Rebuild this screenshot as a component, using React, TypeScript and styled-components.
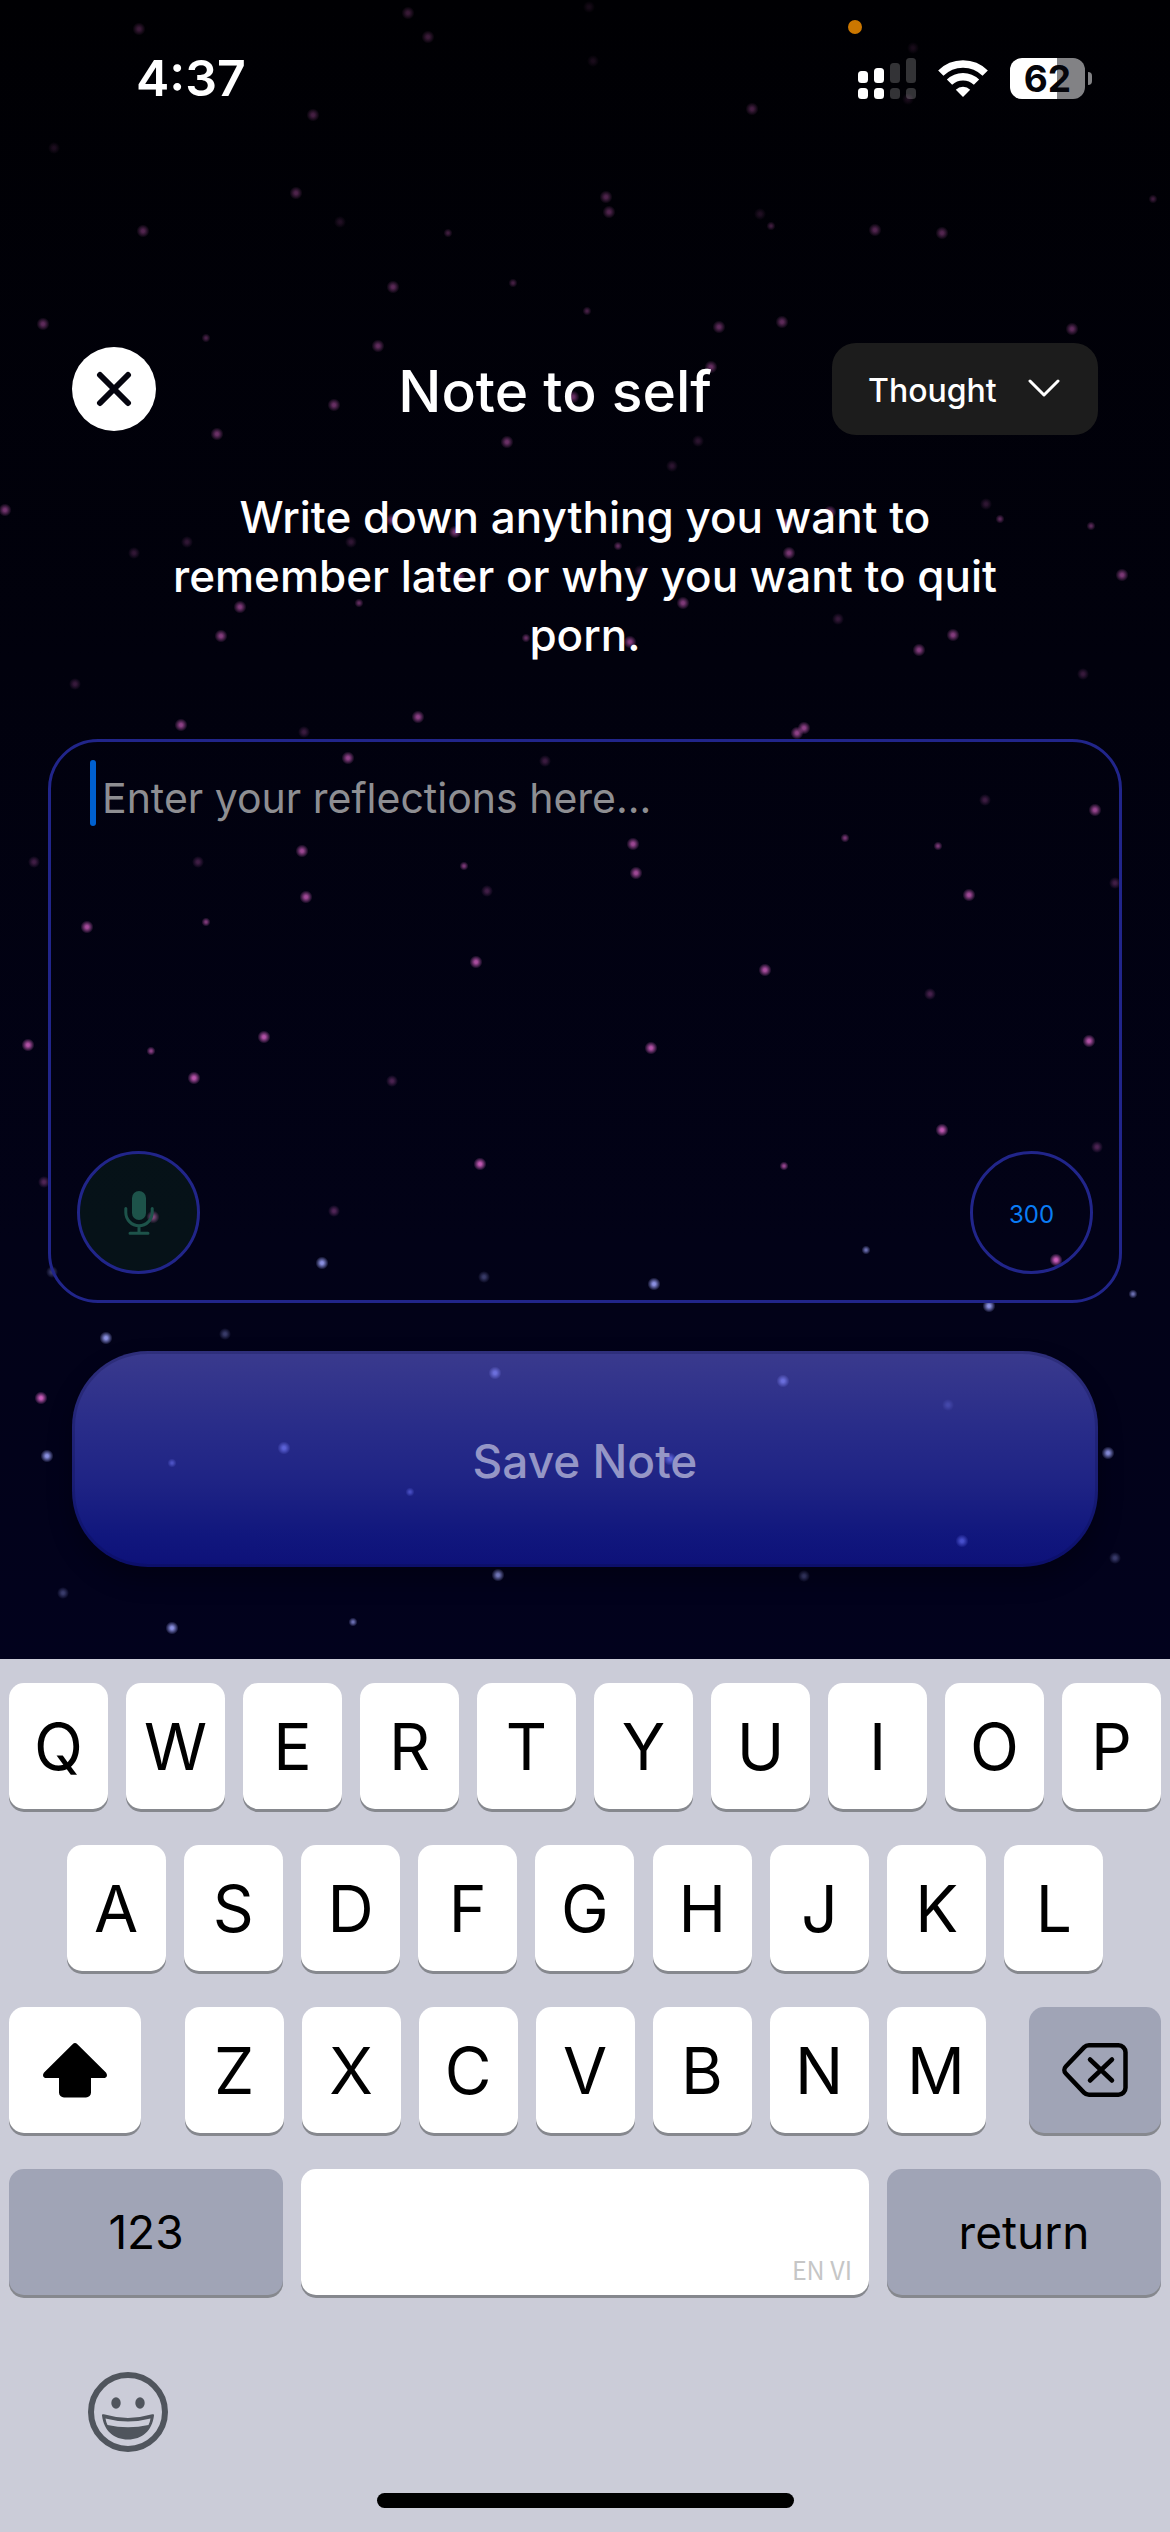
import React, { useState } from "react";
import styled, { createGlobalStyle, css } from "styled-components";

const GlobalStyle = createGlobalStyle`
  *, *::before, *::after { box-sizing: border-box; }
  body { margin: 0; background: #cbccd8; }
  button, textarea, select { font: inherit; color: inherit; margin: 0; padding: 0; border: 0; background: none; }
  svg { display: block; }
`;

const Page = styled.div`
  min-height: 100vh;
  display: flex;
  flex-direction: column;
  font-family: Inter, "Liberation Sans", sans-serif;
  color: #ffffff;
`;

const Screen = styled.div`
  position: relative;
  z-index: 0;
  flex: 1;
  display: flex;
  flex-direction: column;
  padding-bottom: 92px;
  background: linear-gradient(180deg, #000003 0%, #01010d 40%, #020217 75%, #02021d 100%);
`;

const Sky = styled.svg`
  position: absolute;
  inset: 0;
  width: 100%;
  height: 100%;
  z-index: -1;
`;

const StatusBar = styled.header`
  display: flex;
  align-items: center;
  justify-content: space-between;
  height: 156px;
  padding: 0 78px 0 136px;
`;

const Clock = styled.time`
  font-size: 50px;
  line-height: 60px;
  font-weight: 600;
`;

const StatusIcons = styled.div`
  display: flex;
  align-items: center;
  gap: 22px;
`;

const Battery = styled.div`
  display: flex;
  align-items: center;
  gap: 3px;
`;

const BatteryBody = styled.div`
  width: 75px;
  border-radius: 12px;
  background: linear-gradient(90deg, #ffffff 63%, #828285 63%);
  color: #05050a;
  font-size: 37px;
  line-height: 41px;
  font-weight: 700;
  text-align: center;
`;

const BatteryTip = styled.div`
  width: 4px;
  height: 13px;
  border-radius: 0 4px 4px 0;
  background: #828285;
`;

const RecordingDot = styled.div`
  position: absolute;
  top: 20px;
  right: 308px;
  width: 14px;
  height: 14px;
  border-radius: 50%;
  background: #cb7700;
`;

const TitleBar = styled.div`
  display: flex;
  align-items: center;
  margin-top: 187px;
  padding: 0 72px;
`;

const CloseButton = styled.button`
  display: grid;
  place-items: center;
  width: 84px;
  height: 84px;
  border-radius: 50%;
  background: #ffffff;
`;

const Title = styled.h1`
  flex: 1;
  margin: 0;
  padding: 6px 120px 0 0;
  font-size: 57px;
  line-height: 68px;
  font-weight: 500;
  text-align: right;
`;

const Picker = styled.div`
  display: grid;
  align-items: center;
  width: 266px;
  height: 92px;
  border-radius: 24px;
  background: #1c1c1c;

  > * { grid-area: 1 / 1; }
  > svg { justify-self: end; margin-right: 38px; pointer-events: none; }
`;

const PickerSelect = styled.select`
  appearance: none;
  width: 100%;
  height: 100%;
  padding: 4px 0 0 36px;
  font-size: 32px;
  line-height: 40px;
  font-weight: 500;
`;

const Intro = styled.p`
  width: 860px;
  max-width: 100%;
  margin: 53px auto 0;
  font-size: 44px;
  line-height: 59px;
  font-weight: 500;
  text-align: center;
`;

const NoteCard = styled.section`
  display: flex;
  flex-direction: column;
  height: 564px;
  margin: 74px 48px 0;
  padding: 18px 26px 26px;
  border: 3px solid #21258a;
  border-radius: 50px;
`;

const NoteField = styled.div`
  flex: 1;
  display: flex;
  gap: 6px;
  padding-left: 13px;
`;

const Caret = styled.span`
  width: 6px;
  height: 66px;
  border-radius: 3px;
  background: #0060cf;
`;

const NoteInput = styled.textarea`
  flex: 1;
  padding-top: 12px;
  resize: none;
  outline: none;
  font-size: 41px;
  line-height: 52px;

  &::placeholder { color: #8e8e92; opacity: 1; }
`;

const NoteTools = styled.div`
  display: flex;
  justify-content: space-between;
`;

const ring = css`
  display: grid;
  place-items: center;
  width: 123px;
  height: 123px;
  border: 3px solid #21258a;
  border-radius: 50%;
`;

const MicButton = styled.button`
  ${ring}
  background: rgba(12, 42, 28, 0.4);
`;

const Remaining = styled.output`
  ${ring}
  padding-top: 4px;
  color: #0a7cf5;
  font-size: 24px;
`;

const SaveButton = styled.button`
  height: 216px;
  margin: 48px 72px 0;
  padding-top: 4px;
  border: 3px solid rgba(10, 10, 60, 0.22);
  border-radius: 76px;
  background: linear-gradient(180deg, rgba(97, 97, 220, 0.6) 0%, rgba(68, 74, 212, 0.6) 35%, rgba(50, 58, 204, 0.6) 62%, rgba(28, 38, 192, 0.6) 85%, rgba(22, 28, 184, 0.6) 100%) border-box;
  box-shadow: 0 12px 24px rgba(0, 0, 0, 0.3);
  color: #9596c6;
  font-size: 46px;
  line-height: 60px;
  font-weight: 500;
`;

const Keyboard = styled.section`
  display: flex;
  flex-direction: column;
  align-items: stretch;
  gap: 36px;
  padding: 24px 9px;
  background: #cbccd8;
  color: #000000;
`;

const KeyRow = styled.div<{ $inset?: boolean }>`
  display: flex;
  justify-content: space-between;
  padding: 0 ${(p) => (p.$inset ? "5%" : "0")};
`;

const LetterGroup = styled.div`
  flex: 0 1 801px;
  display: flex;
  gap: 18px;
`;

const Key = styled.button<{ $size?: "letter" | "side" | "wide" | "space"; $dim?: boolean }>`
  display: grid;
  place-items: center;
  flex: 0 1 ${(p) => ({ letter: 99, side: 132, wide: 274, space: 568 })[p.$size ?? "letter"]}px;
  min-width: 0;
  height: 126px;
  border-radius: 15px;
  background: ${(p) => (p.$dim ? "#a0a4b6" : "#ffffff")};
  box-shadow: 0 3px 0 #86888e;
  font-size: ${(p) => (p.$size === "wide" ? 46 : 64)}px;
`;

const SpaceKey = styled(Key)`
  place-items: end;
  padding: 0 17px 8px 0;
  color: #c6c6c6;
  font-family: "Noto Sans CJK SC", "Liberation Sans", sans-serif;
  font-size: 25px;
  line-height: 36px;
`;

const KeyboardFooter = styled.div`
  display: flex;
  flex-direction: column;
  gap: 41px;
  padding: 41px 0 0 79px;
`;

const EmojiButton = styled.button`
  width: 80px;
  height: 80px;
`;

const HomeIndicator = styled.div`
  align-self: center;
  width: 417px;
  height: 15px;
  margin-right: 79px;
  border-radius: 8px;
  background: #000000;
`;

type Kind = "b" | "s" | "f";
type Star = [number, number, Kind];

/* b: bright, s: small, f: faint */
const pinkStars: Star[] = [
  [139, 29, "b"], [408, 13, "b"], [589, 7, "f"], [428, 37, "b"], [593, 61, "f"], [913, 48, "f"], [908, 99, "f"],
  [313, 115, "b"], [752, 109, "b"], [54, 148, "f"], [296, 193, "b"], [606, 197, "b"], [609, 212, "b"],
  [1153, 199, "s"], [760, 214, "f"], [771, 226, "s"], [340, 222, "f"], [143, 231, "b"], [448, 233, "s"],
  [875, 230, "b"], [942, 233, "b"], [393, 287, "b"], [513, 283, "s"], [587, 311, "s"], [43, 324, "b"],
  [719, 327, "b"], [782, 322, "b"], [1072, 329, "b"], [206, 338, "s"], [378, 346, "b"], [711, 367, "b"],
  [334, 405, "b"], [573, 397, "b"], [217, 434, "b"], [507, 442, "b"], [698, 441, "f"], [672, 466, "f"],
  [5, 510, "b"], [392, 520, "b"], [455, 532, "b"], [830, 512, "b"], [787, 524, "b"], [986, 504, "f"],
  [1000, 519, "s"], [1091, 526, "s"], [187, 542, "f"], [351, 542, "f"], [134, 553, "f"], [618, 546, "s"],
  [789, 553, "b"], [1122, 575, "b"], [640, 571, "f"], [459, 577, "b"], [240, 607, "b"], [359, 603, "s"],
  [683, 603, "b"], [838, 619, "f"], [221, 636, "b"], [953, 635, "b"], [919, 650, "b"], [526, 638, "s"],
  [630, 642, "b"], [75, 684, "f"], [1083, 674, "f"], [181, 725, "b"], [418, 717, "b"], [304, 732, "f"],
  [797, 733, "b"], [804, 728, "b"], [348, 758, "b"], [545, 761, "f"], [985, 800, "f"], [1095, 810, "b"],
  [633, 844, "b"], [845, 838, "s"], [938, 846, "s"], [302, 851, "b"], [34, 862, "f"], [198, 862, "f"],
  [464, 866, "s"], [636, 873, "b"], [1115, 883, "f"], [487, 891, "f"], [306, 897, "b"], [969, 895, "b"],
  [87, 927, "b"], [206, 922, "s"], [476, 962, "b"], [765, 970, "b"], [930, 994, "f"], [264, 1037, "b"],
  [28, 1045, "b"], [151, 1051, "s"], [651, 1048, "b"], [1089, 1041, "b"], [194, 1078, "b"], [392, 1081, "f"],
  [942, 1130, "b"], [480, 1164, "b"], [784, 1166, "s"], [1097, 1147, "f"], [44, 1182, "f"], [153, 1217, "b"],
  [334, 1211, "f"], [1056, 1260, "b"], [41, 1398, "b"],
];

const blueStars: Star[] = [
  [866, 1250, "s"], [322, 1263, "b"], [484, 1277, "f"], [52, 1272, "f"], [654, 1284, "b"], [1133, 1294, "s"],
  [989, 1306, "b"], [106, 1338, "b"], [225, 1334, "f"], [495, 1373, "b"], [783, 1381, "b"], [948, 1405, "f"],
  [284, 1448, "b"], [172, 1463, "s"], [47, 1456, "b"], [1108, 1453, "b"], [670, 1459, "b"], [410, 1492, "s"],
  [962, 1541, "b"], [1115, 1558, "f"], [498, 1575, "b"], [804, 1576, "f"], [63, 1593, "f"], [172, 1628, "b"],
  [353, 1622, "s"],
];

const radius: Record<Kind, number> = { b: 6.5, s: 4.5, f: 6 };
const strength: Record<Kind, number> = { b: 1, s: 0.75, f: 0.4 };

function StarField() {
  const draw = (stars: Star[], fill: string) =>
    stars.map(([x, y, kind]) => (
      <circle
        key={`${x}-${y}`}
        cx={x}
        cy={y}
        r={radius[kind]}
        fill={`url(#${fill})`}
        opacity={strength[kind] * Math.min(1, 0.27 + y / 1700)}
      />
    ));
  return (
    <Sky viewBox="0 0 1170 1659" preserveAspectRatio="xMidYMin slice" aria-hidden="true">
      <defs>
        <radialGradient id="pink">
          <stop offset="0.2" stopColor="#c95cb9" />
          <stop offset="1" stopColor="#c95cb9" stopOpacity="0" />
        </radialGradient>
        <radialGradient id="blue">
          <stop offset="0.2" stopColor="#8b90e0" />
          <stop offset="1" stopColor="#8b90e0" stopOpacity="0" />
        </radialGradient>
      </defs>
      {draw(pinkStars, "pink")}
      {draw(blueStars, "blue")}
    </Sky>
  );
}

const SignalIcon = () => (
  <svg width="58" height="41" viewBox="0 0 58 41" fill="#ffffff" role="img" aria-label="Signal strength">
    <rect x="0" y="13" width="10" height="12" rx="3.5" />
    <rect x="16" y="10" width="10" height="15" rx="3.5" />
    <rect x="32" y="5" width="10" height="20" rx="3.5" opacity="0.2" />
    <rect x="48" y="0" width="10" height="25" rx="3.5" opacity="0.2" />
    <rect x="0" y="30" width="10" height="11" rx="3.5" />
    <rect x="16" y="30" width="10" height="11" rx="3.5" />
    <rect x="32" y="30" width="10" height="11" rx="3.5" opacity="0.2" />
    <rect x="48" y="30" width="10" height="11" rx="3.5" opacity="0.2" />
  </svg>
);

const WifiIcon = () => (
  <svg width="50" height="37" viewBox="0 0 50 37" role="img" aria-label="Wi-Fi">
    <g fill="none" stroke="#ffffff" strokeWidth="7.5">
      <path d="M2.8 13.2a31.5 31.5 0 0 1 44.4 0" />
      <path d="M11.5 22.2a19.2 19.2 0 0 1 27 0" />
    </g>
    <path d="M25 37l-7.2-7.3a10.2 10.2 0 0 1 14.4 0z" fill="#ffffff" />
  </svg>
);

const CloseIcon = () => (
  <svg width="36" height="36" viewBox="0 0 36 36" fill="none" stroke="#05050f" strokeWidth="6" strokeLinecap="round" aria-hidden="true">
    <path d="M4 4l28 28M32 4L4 32" />
  </svg>
);

const ChevronIcon = () => (
  <svg width="32" height="20" viewBox="0 0 32 20" fill="none" stroke="#ffffff" strokeWidth="3" strokeLinecap="round" strokeLinejoin="round" aria-hidden="true">
    <path d="M2 2l14 14L30 2" />
  </svg>
);

const MicIcon = () => (
  <svg width="30" height="44" viewBox="0 0 30 44" fill="none" stroke="#1d534a" strokeWidth="3" strokeLinecap="round" aria-hidden="true">
    <rect x="8" y="0" width="14" height="29" rx="7" fill="#1d534a" stroke="none" />
    <path d="M1.8 17.5v4a13.2 13.2 0 0 0 26.4 0v-4M15 35v7M6 42.2h18" />
  </svg>
);

const ShiftIcon = () => (
  <svg width="64" height="55" viewBox="0 0 64 55" aria-hidden="true">
    <path d="M29.6 1.3a3.4 3.4 0 0 1 4.8 0L62.4 29c3 3 1.3 6-1.8 6H48v14.5a5 5 0 0 1-5 5H21a5 5 0 0 1-5-5V35H3.4c-3.1 0-4.8-3-1.8-6z" fill="#000000" />
  </svg>
);

const DeleteIcon = () => (
  <svg width="66" height="54" viewBox="0 0 66 54" fill="none" stroke="#000000" strokeWidth="4.5" strokeLinecap="round" strokeLinejoin="round" aria-hidden="true">
    <path d="M27 2.3h29.5a7 7 0 0 1 7 7v35.4a7 7 0 0 1-7 7H27a7 7 0 0 1-5-2.1L3.8 30.5a5 5 0 0 1 0-7L22 4.4a7 7 0 0 1 5-2.1z" />
    <path d="M28 16.5l22 21M50 16.5l-22 21" />
  </svg>
);

const EmojiIcon = () => (
  <svg width="80" height="80" viewBox="0 0 80 80" aria-hidden="true">
    <circle cx="40" cy="40" r="37" fill="none" stroke="#50555d" strokeWidth="6" />
    <ellipse cx="28" cy="31" rx="4.7" ry="5.7" fill="#50555d" />
    <ellipse cx="52" cy="31" rx="4.7" ry="5.7" fill="#50555d" />
    <path d="M14 43.5q-.3-1.8 1.8-1.2Q40 49.5 64.2 42.3q2.1-.6 1.8 1.2C64 59 54 67.5 40 67.5S16 59 14 43.5z" fill="#50555d" />
    <path d="M17.5 46.5Q40 52.5 62.5 46.5q-.5 3.5-2 6.5Q40 57.5 19.5 53q-1.5-3-2-6.5z" fill="#cbccd8" />
  </svg>
);

const LIMIT = 300;

export default function App() {
  const [note, setNote] = useState("");
  const letters = (row: string) => row.split("").map((c) => <Key key={c} type="button">{c}</Key>);

  return (
    <>
      <GlobalStyle />
      <Page>
        <Screen>
          <StarField />
          <RecordingDot />
          <StatusBar>
            <Clock>4:37</Clock>
            <StatusIcons>
              <SignalIcon />
              <WifiIcon />
              <Battery>
                <BatteryBody>62</BatteryBody>
                <BatteryTip />
              </Battery>
            </StatusIcons>
          </StatusBar>
          <TitleBar>
            <CloseButton type="button" aria-label="Close">
              <CloseIcon />
            </CloseButton>
            <Title>Note to self</Title>
            <Picker>
              <PickerSelect aria-label="Note type" defaultValue="Thought">
                <option>Thought</option>
              </PickerSelect>
              <ChevronIcon />
            </Picker>
          </TitleBar>
          <Intro>Write down anything you want to remember later or why you want to quit porn.</Intro>
          <NoteCard>
            <NoteField>
              <Caret />
              <NoteInput
                aria-label="Note"
                placeholder="Enter your reflections here..."
                maxLength={LIMIT}
                value={note}
                onChange={(e) => setNote(e.target.value)}
              />
            </NoteField>
            <NoteTools>
              <MicButton type="button" aria-label="Dictate">
                <MicIcon />
              </MicButton>
              <Remaining>{LIMIT - note.length}</Remaining>
            </NoteTools>
          </NoteCard>
          <SaveButton type="button">Save Note</SaveButton>
        </Screen>
        <Keyboard aria-label="Keyboard">
          <KeyRow>{letters("QWERTYUIOP")}</KeyRow>
          <KeyRow $inset>{letters("ASDFGHJKL")}</KeyRow>
          <KeyRow>
            <Key type="button" $size="side" aria-label="Shift"><ShiftIcon /></Key>
            <LetterGroup>{letters("ZXCVBNM")}</LetterGroup>
            <Key type="button" $size="side" $dim aria-label="Delete"><DeleteIcon /></Key>
          </KeyRow>
          <KeyRow>
            <Key type="button" $size="wide" $dim>123</Key>
            <SpaceKey type="button" $size="space">EN VI</SpaceKey>
            <Key type="button" $size="wide" $dim>return</Key>
          </KeyRow>
          <KeyboardFooter>
            <EmojiButton type="button" aria-label="Emoji"><EmojiIcon /></EmojiButton>
            <HomeIndicator />
          </KeyboardFooter>
        </Keyboard>
      </Page>
    </>
  );
}
